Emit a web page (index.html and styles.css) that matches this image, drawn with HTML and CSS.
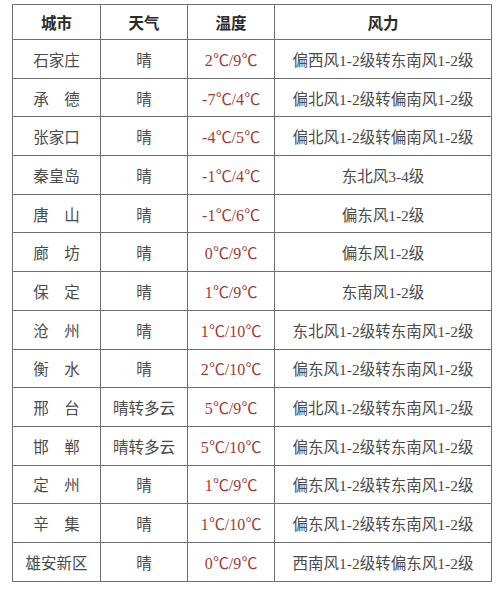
FILE: index.html
```html
<!DOCTYPE html>
<html lang="zh-CN">
<head>
<meta charset="utf-8">
<link rel="stylesheet" href="styles.css">
</head>
<body>
<table class="weather">
  <colgroup>
    <col class="c1"><col class="c2"><col class="c3"><col class="c4">
  </colgroup>
  <thead>
    <tr><th>城市</th><th>天气</th><th>温度</th><th>风力</th></tr>
  </thead>
  <tbody>
    <tr><td>石家庄</td><td>晴</td><td class="t">2<span class="u">℃</span>/9<span class="u">℃</span></td><td>偏西风1-2级转东南风1-2级</td></tr>
    <tr><td>承　德</td><td>晴</td><td class="t">-7<span class="u">℃</span>/4<span class="u">℃</span></td><td>偏北风1-2级转偏南风1-2级</td></tr>
    <tr><td>张家口</td><td>晴</td><td class="t">-4<span class="u">℃</span>/5<span class="u">℃</span></td><td>偏北风1-2级转偏南风1-2级</td></tr>
    <tr><td>秦皇岛</td><td>晴</td><td class="t">-1<span class="u">℃</span>/4<span class="u">℃</span></td><td>东北风3-4级</td></tr>
    <tr><td>唐　山</td><td>晴</td><td class="t">-1<span class="u">℃</span>/6<span class="u">℃</span></td><td>偏东风1-2级</td></tr>
    <tr><td>廊　坊</td><td>晴</td><td class="t">0<span class="u">℃</span>/9<span class="u">℃</span></td><td>偏东风1-2级</td></tr>
    <tr><td>保　定</td><td>晴</td><td class="t">1<span class="u">℃</span>/9<span class="u">℃</span></td><td>东南风1-2级</td></tr>
    <tr><td>沧　州</td><td>晴</td><td class="t">1<span class="u">℃</span>/10<span class="u">℃</span></td><td>东北风1-2级转东南风1-2级</td></tr>
    <tr><td>衡　水</td><td>晴</td><td class="t">2<span class="u">℃</span>/10<span class="u">℃</span></td><td>偏东风1-2级转东南风1-2级</td></tr>
    <tr><td>邢　台</td><td>晴转多云</td><td class="t">5<span class="u">℃</span>/9<span class="u">℃</span></td><td>偏北风1-2级转东南风1-2级</td></tr>
    <tr><td>邯　郸</td><td>晴转多云</td><td class="t">5<span class="u">℃</span>/10<span class="u">℃</span></td><td>偏东风1-2级转东南风1-2级</td></tr>
    <tr><td>定　州</td><td>晴</td><td class="t">1<span class="u">℃</span>/9<span class="u">℃</span></td><td>偏东风1-2级转东南风1-2级</td></tr>
    <tr><td>辛　集</td><td>晴</td><td class="t">1<span class="u">℃</span>/10<span class="u">℃</span></td><td>偏东风1-2级转东南风1-2级</td></tr>
    <tr><td>雄安新区</td><td>晴</td><td class="t">0<span class="u">℃</span>/9<span class="u">℃</span></td><td>西南风1-2级转偏东风1-2级</td></tr>
  </tbody>
</table>
</body>
</html>
```
FILE: styles.css
```css
html, body {
  margin: 0;
  padding: 0;
  background: #ffffff;
}
body {
  padding: 4px 0 0 12px;
  font-family: "Liberation Serif", "Noto Sans CJK SC", serif;
  color: #4a4a4a;
}
.weather {
  border-collapse: collapse;
  width: 479px;
  table-layout: fixed;
  font-size: 15.5px;
}
.c1 { width: 88px; }
.c2 { width: 87px; }
.c3 { width: 87px; }
.c4 { width: 217px; }
.weather th, .weather td {
  border: 1px solid #6e6e6e;
  text-align: center;
  vertical-align: middle;
  padding: 0;
  white-space: nowrap;
}
.weather th {
  height: 34px;
  font-weight: bold;
  color: #2a2a2a;
  font-size: 15.5px;
}
.weather td {
  height: 37.7px;
}
.weather td.t {
  color: #a23a36;
  font-size: 16px;
}
.weather .u {
  display: inline-block;
  width: 1em;
  text-align: center;
  letter-spacing: -0.5px;
}
```
